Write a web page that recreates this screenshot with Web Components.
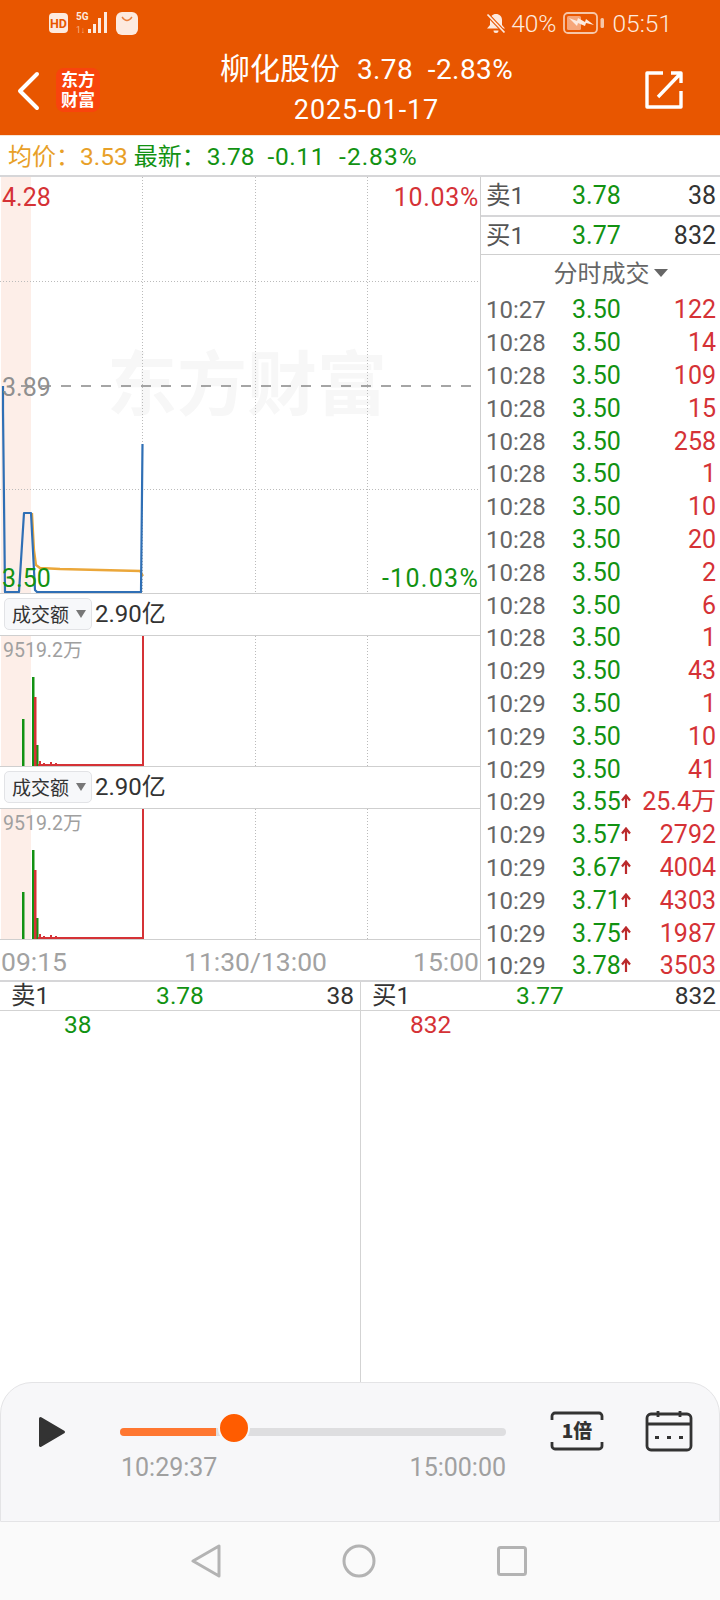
<!DOCTYPE html>
<html lang="zh">
<head>
<meta charset="utf-8">
<title>柳化股份</title>
<style>
    html, body { margin: 0; padding: 0; background: #fff; }
    body { width: 720px; height: 1600px; overflow: hidden; font-family: Roboto, "Noto Sans CJK SC", sans-serif; }
    #app { display: flex; flex-direction: column; width: 720px; height: 1600px; }
</style>
</head>
<body>
<div id="app">
    <top-header></top-header>
    <quote-bar></quote-bar>
    <chart-area></chart-area>
    <depth-panel></depth-panel>
    <replay-player></replay-player>
    <nav-keys></nav-keys>
</div>
<script>
const RED = '#d53236', GREEN = '#129212', FONT = 'Roboto, "Noto Sans CJK SC", sans-serif';

class TopHeader extends HTMLElement {
    constructor(){
        super();
        this.attachShadow({mode: 'open'}).innerHTML = `
            <style>
                :host { display: block; height: 135px; background: #e85600; color: #fff; font-family: ${FONT}; flex: none; }
                .status { display: flex; align-items: center; height: 46px; padding: 0 48px 0 49px; color: #fdeadf; }
                .status svg { display: block; flex: none; }
                .left { display: flex; align-items: center; gap: 8px; }
                .right { margin-left: auto; display: flex; align-items: center; font-size: 24.500px; font-weight: 300; }
                .nav { display: flex; align-items: flex-start; height: 89px; }
                .back { margin: 25px 0 0 16px; display: block; flex: none; }
                .logo { margin: 22px 0 0 16px; width: 44px; height: 44px; flex: none; border-radius: 8px; background: #f8440d;
                    font: 700 17px/20px ${FONT}; text-align: center; padding-top: 2px; box-sizing: border-box; }
                .title { flex: 1; text-align: center; padding-top: 2px; margin-left: -12px; }
                .l1 { height: 41px; line-height: 41px; font-size: 28px; white-space: pre; letter-spacing: .4px; }
                .l1 b { font-weight: 400; font-size: 30px; margin-right: 17px; letter-spacing: 0; }
                .l2 { height: 42px; line-height: 42px; font-size: 27px; letter-spacing: .9px; }
                .share { margin: 25px 37px 0 0; display: block; flex: none; }
            </style>
            <div class="status">
                <div class="left">
                    <svg width="19" height="20" viewBox="0 0 19 20"><rect width="19" height="20" rx="4" fill="#fdeadf"/><text x="9.500" y="15" text-anchor="middle" font-family="Roboto" font-weight="700" font-size="12.500" fill="#e85600">HD</text></svg>
                    <svg width="32" height="24" viewBox="0 0 32 24"><text x="0" y="9" font-family="Roboto" font-weight="700" font-size="10" fill="#fdeadf">5G</text><text x="0" y="22" font-family="Roboto" font-size="8.500" fill="#f9b48c">1↓</text><g fill="#fdeadf"><rect x="12" y="18" width="3" height="4"/><rect x="17" y="13" width="3" height="9"/><rect x="22" y="7" width="3" height="15"/><rect x="28" y="1" width="3" height="21"/></g></svg>
                    <svg width="22" height="23" viewBox="0 0 22 23"><rect width="22" height="23" rx="6" fill="#fdeadf"/><path d="M6 5q5 7 10 0" fill="none" stroke="#e9803f" stroke-width="1.300"/></svg>
                </div>
                <div class="right">
                    <svg width="20" height="21" viewBox="0 0 20 21" style="margin-right:5px"><path d="M10 1c3.500 0 6 2.500 6 6v5l3 3.500H1l3-3.500V7c0-3.500 2.500-6 6-6z" fill="#fdeadf"/><path d="M7.500 17.500h5a2.500 2.500 0 0 1-5 0z" fill="#fdeadf"/><path d="M1.500 1.500l17 18" stroke="#e85600" stroke-width="4"/><path d="M1.500 1.500l17 18" stroke="#fdeadf" stroke-width="1.800"/></svg>
                    <span>40%</span>
                    <svg width="41" height="22" viewBox="0 0 41 22" style="margin:0 8px 0 7px"><rect x="1" y="1" width="33" height="20" rx="4" fill="none" stroke="#f6c6a8" stroke-width="1.800"/><rect x="4" y="4" width="14" height="14" rx="1.500" fill="#f6a67a"/><path d="M6 6l8 3 1-3 7 4 1-3 8 6-8-2-1 3-7-3-1 3z" fill="#fdeadf"/><rect x="37.500" y="6" width="3.500" height="10" rx="1.500" fill="#f6c6a8"/></svg>
                    <span>05:51</span>
                </div>
            </div>
            <div class="nav">
                <svg class="back" width="24" height="40" viewBox="0 0 24 40"><path d="M21 3L4 20l17 17" fill="none" stroke="#fff" stroke-width="4" stroke-linecap="round" stroke-linejoin="round"/></svg>
                <div class="logo">东方<br>财富</div>
                <div class="title">
                    <div class="l1"><b>柳化股份</b>3.78  -2.83%</div>
                    <div class="l2">2025-01-17</div>
                </div>
                <svg class="share" width="38" height="38" viewBox="0 0 38 38"><path d="M18 2H2v34h34V20M13 26L36 2M26 2h10v10" fill="none" stroke="#fff" stroke-width="3.400" stroke-linejoin="round"/></svg>
            </div>`;
    }
}
customElements.define('top-header', TopHeader);

class QuoteBar extends HTMLElement {
    constructor(){
        super();
        this.attachShadow({mode: 'open'}).innerHTML = `
            <style>
                :host { display: flex; align-items: center; box-sizing: border-box; height: 42px; flex: none; padding: 2px 0 0 8px;
                    border-bottom: 2px solid #d6d6d8; border-top: 1px solid #f6e5d5; font: 24.500px/30px ${FONT}; color: ${GREEN}; white-space: pre; }
                .avg { color: #e8a028; }
                .cn { font-size: 24px; }
            </style>
            <span class="avg cn">均价：</span><span class="avg">3.53</span><span class="cn" style="margin-left:6px">最新：</span><span style="margin-left:1px">3.78</span><span style="margin-left:13px;letter-spacing:.6px">-0.11</span><span style="margin-left:14px;letter-spacing:1px">-2.83%</span>`;
    }
}
customElements.define('quote-bar', QuoteBar);

// grid + pre-market band, shared by price and volume charts
function gridLines(y0, y1){
    return `<rect x="1" y="${y0}" width="30" height="${y1 - y0}" fill="#fdeee8"/>` +
        [142, 255, 367].map(x => `<line x1="${x}.5" x2="${x}.5" y1="${y0}" y2="${y1}" stroke="#bbb" stroke-dasharray="1 2"/>`).join('');
}

class PriceChart extends HTMLElement {
    constructor(){
        super();
        this.attachShadow({mode: 'open'}).innerHTML = `
            <style>
                :host { display: block; height: 417px; border-bottom: 1px solid #cfcfcf; box-sizing: border-box; flex: none; }
                svg { display: block; }
                text { font-family: ${FONT}; font-size: 25px; }
                .pct { letter-spacing: .7px; }
            </style>
            <svg width="480" height="416" viewBox="0 177 480 416">
                <text x="247" y="410" text-anchor="middle" style="font: 700 70px 'Noto Sans CJK SC', sans-serif" fill="#f7f7f7">东方财富</text>
                ${gridLines(177, 593)}
                <line x1="0" x2="480" y1="281.500" y2="281.500" stroke="#bbb" stroke-dasharray="1 2"/>
                <line x1="0" x2="480" y1="489.500" y2="489.500" stroke="#bbb" stroke-dasharray="1 2"/>
                <line x1="21" x2="476" y1="386" y2="386" stroke="#888" stroke-width="1.500" stroke-dasharray="10 10"/>
                <path d="M32 513L34 550 36 565 40 568 60 569 100 570 140 571 143 576" fill="none" stroke="#eba73a" stroke-width="2.300"/>
                <path d="M3 386V410L5 592H19L24 513H31L35 590 37 592H141L142.500 444" fill="none" stroke="#2f6fb5" stroke-width="2.200" stroke-linejoin="round"/>
                <text x="2" y="206" fill="${RED}">4.28</text>
                <text x="2" y="396" fill="#8f8f8f">3.89</text>
                <text x="2" y="587" fill="${GREEN}">3.50</text>
                <text class="pct" x="479" y="206" text-anchor="end" fill="${RED}">10.03%</text>
                <text class="pct" x="479" y="587" text-anchor="end" fill="${GREEN}" style="letter-spacing:1.300px">-10.03%</text>
            </svg>`;
    }
}
customElements.define('price-chart', PriceChart);

class VolumePanel extends HTMLElement {
    constructor(){
        super();
        this.attachShadow({mode: 'open'}).innerHTML = `
            <style>
                :host { display: block; flex: none; }
                .head { display: flex; align-items: center; box-sizing: border-box; height: 42px; padding: 0 0 1px 4px; border-bottom: 1px solid #cfcfcf; }
                .chip { display: flex; align-items: center; box-sizing: border-box; width: 88px; height: 32px; border: 1px solid #e2e3e6; border-radius: 5px;
                    background: #f7f8fa; padding-left: 7px; font: 19px/30px "Noto Sans CJK SC", sans-serif; color: #333; }
                .chip i { margin-left: 7px; border: 5px solid transparent; border-top: 8px solid #777; border-bottom: 0; }
                .val { margin-left: 3px; font: 24px/30px ${FONT}; color: #333; }
                svg { display: block; }
                .scale { font: 19.500px ${FONT}; fill: #a0a0a0; }
                .wrap { border-bottom: 1px solid #cfcfcf; }
            </style>
            <div class="head"><span class="chip">成交额<i></i></span><span class="val"><slot></slot></span></div>
            <div class="wrap">
            <svg width="480" height="130" viewBox="0 636 480 130">
                ${gridLines(636, 766)}
                <text class="scale" x="3" y="657">9519.2万</text>
                <g fill="${GREEN}">
                    <rect x="22" y="719" width="2.500" height="47"/>
                    <rect x="32" y="677" width="2.500" height="89"/>
                    <rect x="36" y="745" width="2.500" height="21"/>
                </g>
                <g fill="${RED}">
                    <rect x="34" y="697" width="2.500" height="69"/>
                    <rect x="39" y="761" width="2" height="5"/>
                    <rect x="43" y="763" width="2" height="3"/>
                    <rect x="50" y="762" width="2" height="4"/>
                    <rect x="55" y="763" width="2" height="3"/>
                    <rect x="38" y="764" width="105" height="2"/>
                    <rect x="142" y="636" width="2" height="130"/>
                </g>
            </svg>
            </div>`;
    }
}
customElements.define('volume-panel', VolumePanel);

class TimeAxis extends HTMLElement {
    constructor(){
        super();
        this.attachShadow({mode: 'open'}).innerHTML = `
            <style>
                :host { display: grid; grid-template-columns: 183px auto 1fr; align-items: center; flex: 1; box-sizing: border-box; padding: 3px 1px 0 1px;
                    font: 26.500px/32px ${FONT}; color: #a2a2a2; }
                span:last-child { text-align: right; }
            </style>
            <span>09:15</span><span>11:30/13:00</span><span>15:00</span>`;
    }
}
customElements.define('time-axis', TimeAxis);

class TradeColumn extends HTMLElement {
    constructor(){
        super();
        const up = `<svg class="up" width="10" height="15" viewBox="0 0 10 15"><path d="M5 14V2M1 6.500L5 1.500l4 5" fill="none" stroke="#bb2a2c" stroke-width="2.200"/></svg>`;
        const trades = [
            ['10:27','3.50','122'],['10:28','3.50','14'],['10:28','3.50','109'],['10:28','3.50','15'],['10:28','3.50','258'],
            ['10:28','3.50','1'],['10:28','3.50','10'],['10:28','3.50','20'],['10:28','3.50','2'],['10:28','3.50','6'],
            ['10:28','3.50','1'],['10:29','3.50','43'],['10:29','3.50','1'],['10:29','3.50','10'],['10:29','3.50','41'],
            ['10:29','3.55','25.4万',1],['10:29','3.57','2792',1],['10:29','3.67','4004',1],['10:29','3.71','4303',1],['10:29','3.75','1987',1],['10:29','3.78','3503',1]
        ];
        const rows = trades.map(([t, p, q, u]) => `
            <div class="row"><span class="t">${t}</span><span class="p">${p}${u ? up : ''}</span><span class="q">${q}</span></div>`).join('');
        this.attachShadow({mode: 'open'}).innerHTML = `
            <style>
                :host { display: flex; flex-direction: column; box-sizing: border-box; width: 240px; height: 803px; flex: none; border-left: 1px solid #cfcfcf; font: 25px/30px ${FONT}; color: #333; }
                .row { display: grid; grid-template-columns: 86px 1fr auto; align-items: center; padding: 0 4px 0 5px; }
                .book { flex: none; height: 40px; box-sizing: border-box; border-bottom: 2px solid #d6d6d8; }
                .book + .book { height: 38px; border-bottom: 1px solid #cfcfcf; }
                .book .l { color: #555; font-size: 24.500px; }
                .p { color: ${GREEN}; position: relative; }
                .head { height: 37px; flex: none; display: flex; align-items: center; justify-content: center; color: #666; font-size: 24px; padding-left: 20px; box-sizing: border-box; }
                .head i { margin-left: 4px; border: 7px solid transparent; border-top: 8px solid #666; border-bottom: 0; margin-top: -2px; }
                .list { flex: none; display: grid; grid-auto-rows: 32.800px; padding-top: 2px; height: 686px; box-sizing: content-box; }
                .t { color: #666; font-size: 24px; }
                .q { color: ${RED}; text-align: right; }
                .up { position: absolute; left: 49px; top: 7px; }
            </style>
            <div class="row book"><span class="l">卖1</span><span class="p">3.78</span><span>38</span></div>
            <div class="row book"><span class="l">买1</span><span class="p">3.77</span><span>832</span></div>
            <div class="head">分时成交<i></i></div>
            <div class="list">${rows}</div>`;
    }
}
customElements.define('trade-column', TradeColumn);

class ChartArea extends HTMLElement {
    constructor(){
        super();
        this.attachShadow({mode: 'open'}).innerHTML = `
            <style>
                :host { display: flex; height: 805px; flex: none; box-sizing: border-box; border-bottom: 2px solid #d6d6d8; }
                .left { width: 480px; flex: none; display: flex; flex-direction: column; }
            </style>
            <div class="left">
                <price-chart></price-chart>
                <volume-panel>2.90亿</volume-panel>
                <volume-panel>2.90亿</volume-panel>
                <time-axis></time-axis>
            </div>
            <trade-column></trade-column>`;
    }
}
customElements.define('chart-area', ChartArea);

class DepthSide extends HTMLElement {
    constructor(){
        super();
        const s = this.getAttribute('label'), p = this.getAttribute('price'), q = this.getAttribute('qty');
        this.attachShadow({mode: 'open'}).innerHTML = `
            <style>
                :host { display: flex; flex-direction: column; font: 24.500px/28px ${FONT}; color: #333; }
                .top { display: grid; grid-template-columns: 1fr auto 1fr; align-items: center; height: 28px; border-bottom: 1px solid #d3d3d3;
                    padding: 1px var(--pad-r) 0 11px; box-sizing: content-box; margin-top: -1px; }
                .top .q { text-align: right; }
                .top .p { color: ${GREEN}; margin-right: var(--nudge); }
                .bar { height: 28px; line-height: 28px; }
            </style>
            <div class="top"><span>${s}</span><span class="p">${p}</span><span class="q">${q}</span></div>
            <div class="bar"><slot></slot></div>`;
    }
}
customElements.define('depth-side', DepthSide);

class DepthPanel extends HTMLElement {
    constructor(){
        super();
        this.attachShadow({mode: 'open'}).innerHTML = `
            <style>
                :host { display: grid; grid-template-columns: 361px 359px; height: 400px; flex: none; }
                depth-side { box-sizing: border-box; }
                .a { --pad-r: 6px; --nudge: 5px; border-right: 1px solid #d3d3d3; }
                .b { --pad-r: 4px; --nudge: 8px; }
                span { display: block; color: ${GREEN}; padding-left: 64px; }
                .b span { color: ${RED}; padding-left: 49px; }
            </style>
            <depth-side class="a" label="卖1" price="3.78" qty="38"><span>38</span></depth-side>
            <depth-side class="b" label="买1" price="3.77" qty="832"><span>832</span></depth-side>`;
    }
}
customElements.define('depth-panel', DepthPanel);

class ReplayPlayer extends HTMLElement {
    constructor(){
        super();
        this.attachShadow({mode: 'open'}).innerHTML = `
            <style>
                :host { display: flex; box-sizing: border-box; height: 140px; flex: none; background: #f7f7f9; border: 1px solid #e4e4e6;
                    border-radius: 32px 32px 0 0; padding: 28px 0 0 38px; align-items: flex-start; }
                svg { flex: none; }
                .play { display: block; margin: 5px 0 0 -1px; }
                .mid { width: 386px; flex: none; margin-left: 54px; }
                .track { position: relative; height: 8px; margin-top: 17px; border-radius: 4px; background: #dedee0; }
                .fill { width: 96px; height: 8px; border-radius: 4px 0 0 4px; background: #ff7731; }
                .thumb { position: absolute; left: 98px; top: -16px; width: 28px; height: 28px; border-radius: 50%; background: #ff5c00; border: 2px solid #f7f7f9; }
                .times { display: flex; justify-content: space-between; margin-top: 17px; padding-left: 1px; font: 25px/30px ${FONT}; color: #a0a0a0; }
                .speed { display: block; margin: 0 0 0 44px; }
                .cal { display: block; margin: -1px 0 0 41px; }
                text { font: 800 19px "Noto Sans CJK SC", sans-serif; fill: #333; }
            </style>
            <svg class="play" width="28" height="32" viewBox="0 0 28 32"><path d="M2.500 2.500L25.500 16 2.500 29.500z" fill="#333" stroke="#333" stroke-width="3" stroke-linejoin="round"/></svg>
            <div class="mid">
                <div class="track"><div class="fill"></div><div class="thumb"></div></div>
                <div class="times"><span>10:29:37</span><span>15:00:00</span></div>
            </div>
            <svg class="speed" width="54" height="40" viewBox="0 0 54 40"><path d="M2 9V5a3 3 0 0 1 3-3h44a3 3 0 0 1 3 3v4M2 31v4a3 3 0 0 0 3 3h44a3 3 0 0 0 3-3v-4" fill="none" stroke="#333" stroke-width="2.800"/><text x="27" y="27" text-anchor="middle">1倍</text></svg>
            <svg class="cal" width="48" height="42" viewBox="0 0 48 42"><rect x="2" y="4" width="44" height="36" rx="4" fill="none" stroke="#333" stroke-width="2.800"/><path d="M2 14h44M13 1v6M35 1v6" stroke="#333" stroke-width="2.800"/><path d="M10 26h4v3h-4zM22 26h4v3h-4zM34 26h4v3h-4z" fill="#333"/></svg>`;
    }
}
customElements.define('replay-player', ReplayPlayer);

class NavKeys extends HTMLElement {
    constructor(){
        super();
        this.attachShadow({mode: 'open'}).innerHTML = `
            <style>
                :host { display: flex; align-items: center; flex: 1; background: #fafafa; padding: 0 193px 0 191px; justify-content: space-between; }
                svg { display: block; }
            </style>
            <svg width="30" height="34" viewBox="0 0 30 34"><path d="M28 2v30L2 17z" fill="none" stroke="#b3b3b3" stroke-width="3" stroke-linejoin="round"/></svg>
            <svg width="34" height="34" viewBox="0 0 34 34"><circle cx="17" cy="17" r="15" fill="none" stroke="#b3b3b3" stroke-width="3"/></svg>
            <svg width="30" height="30" viewBox="0 0 30 30"><rect x="1.500" y="1.500" width="27" height="27" rx="2" fill="none" stroke="#b3b3b3" stroke-width="3"/></svg>`;
    }
}
customElements.define('nav-keys', NavKeys);
</script>
</body>
</html>
